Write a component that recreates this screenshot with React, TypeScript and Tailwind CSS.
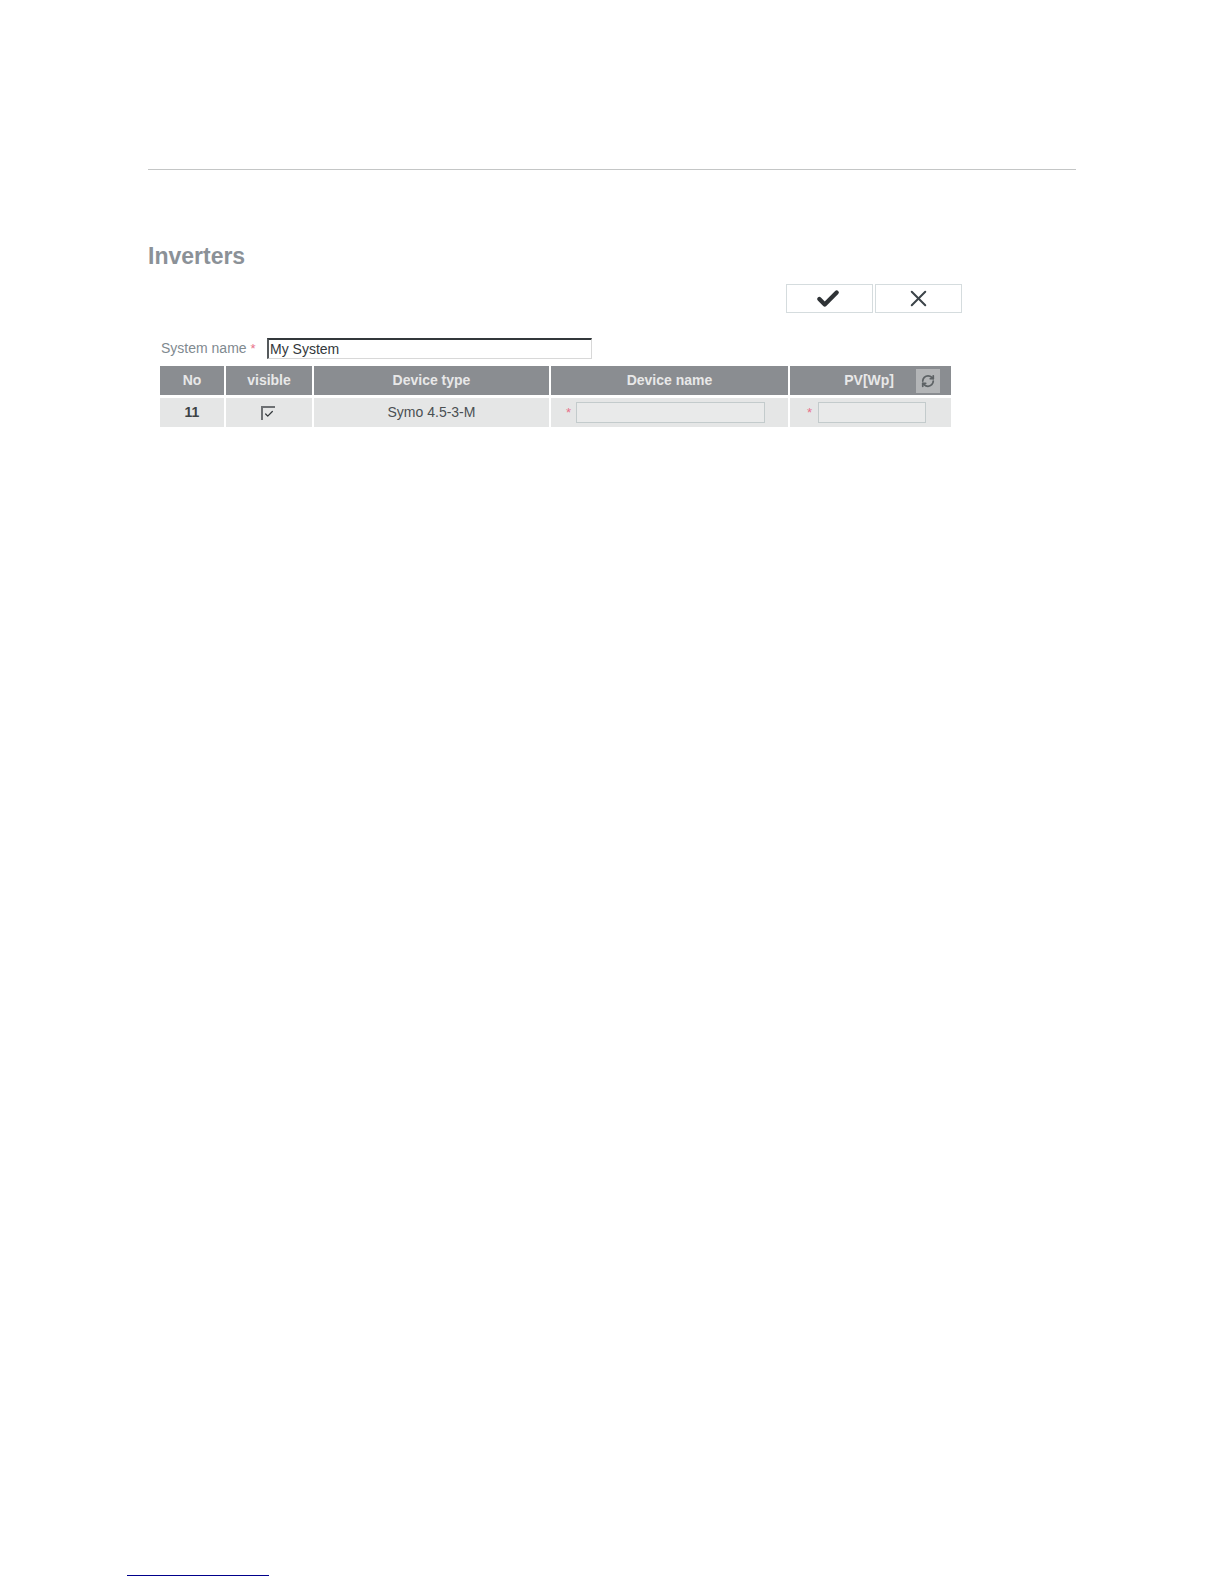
import { Check, RefreshCw, X } from "lucide-react";

const font = "font-['Liberation_Sans',Arial,sans-serif]";

const Star = () => <span className="text-[13px] text-[#e8718a]">*</span>;

export default function App() {
  return (
    <main className={`${font} w-[1224px] h-[1584px] bg-white flex flex-col`}>
      {/* Top rule */}
      <div className="mt-[169px] ml-[148px] w-[928px] h-px bg-[#c4c6c6]" />

      <div className="ml-[148px] mt-[72px] w-[920px] flex flex-col">
        <h1 className="text-[23px] leading-[28px] font-bold text-[#8b9197]">Inverters</h1>

        {/* Save / cancel */}
        <div className="mt-[14px] ml-[638px] flex gap-[2px]">
          <button className="w-[87px] h-[29px] border border-[#d5dcde] flex items-center justify-center">
            <Check size={26} strokeWidth={4} className="text-[#2f3336] -ml-[3px]" />
          </button>
          <button className="w-[87px] h-[29px] border border-[#d5dcde] flex items-center justify-center">
            <X size={27} strokeWidth={1.8} className="text-[#3c4449]" />
          </button>
        </div>

        {/* System name */}
        <div className="mt-[25px] ml-[13px] flex items-center h-[21px]">
          <span className="w-[106px] text-[14px] text-[#7f8a90]">
            System name <Star />
          </span>
          <div className="w-[325px] h-[21px] border border-[#d8d8d8] border-t-2 border-t-[#33383b] border-l-2 border-l-[#55595c] pl-[1px] text-[14px] leading-[18px] text-[#33383b]">
            My System
          </div>
        </div>

        {/* Table */}
        <div className="mt-[7px] ml-[12px] w-[791px] grid grid-cols-[64px_86px_235px_237px_161px] gap-x-[2px] gap-y-[3px] text-[14px]">
          <div className="h-[29px] bg-[#8a8d91] text-[#e8e8e8] font-bold flex items-center justify-center">No</div>
          <div className="h-[29px] bg-[#8a8d91] text-[#e8e8e8] font-bold flex items-center justify-center">visible</div>
          <div className="h-[29px] bg-[#8a8d91] text-[#e8e8e8] font-bold flex items-center justify-center">Device type</div>
          <div className="h-[29px] bg-[#8a8d91] text-[#e8e8e8] font-bold flex items-center justify-center">Device name</div>
          <div className="h-[29px] bg-[#8a8d91] text-[#e8e8e8] font-bold flex items-center justify-end pr-[11px] gap-[22px]">
            <span>PV[Wp]</span>
            <span className="w-6 h-6 bg-[#b3b5b7] flex items-center justify-center">
              <RefreshCw size={14} strokeWidth={3} className="text-[#5d6265]" />
            </span>
          </div>

          <div className="h-[29px] bg-[#e5e6e6] font-bold text-[#3d4245] flex items-center justify-center">11</div>
          <div className="h-[29px] bg-[#e5e6e6] flex items-center justify-center pr-[2px]">
            <span className="w-[14px] h-[14px] border-t-2 border-l-2 border-[#6d7073] flex items-center justify-center">
              <Check size={10} strokeWidth={3} className="text-[#33383b]" />
            </span>
          </div>
          <div className="h-[29px] bg-[#e5e6e6] text-[#4a4f52] flex items-center justify-center">Symo 4.5-3-M</div>
          <div className="h-[29px] bg-[#e5e6e6] flex items-center pl-[15px] gap-[5px]">
            <Star />
            <span className="w-[189px] h-[21px] border border-[#c3cbcc] bg-[#e9eaea]" />
          </div>
          <div className="h-[29px] bg-[#e5e6e6] flex items-center pl-[17px] gap-[6px]">
            <Star />
            <span className="w-[108px] h-[21px] border border-[#c3cbcc] bg-[#e9eaea]" />
          </div>
        </div>
      </div>

      {/* Footnote rule */}
      <div className="mt-auto mb-[8px] ml-[127px] w-[142px] h-px bg-[#00008b]" />
    </main>
  );
}
